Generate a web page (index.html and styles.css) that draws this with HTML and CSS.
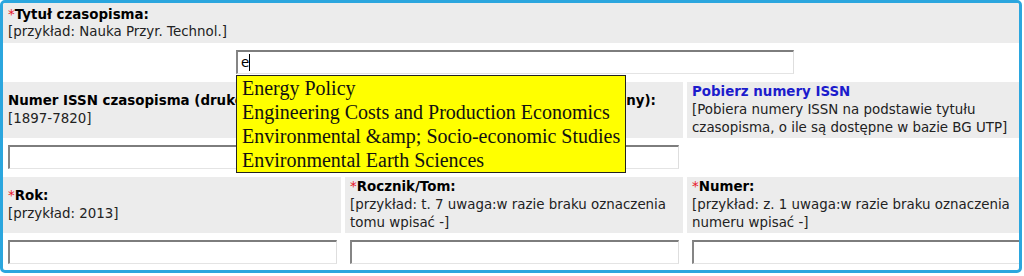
FILE: index.html
```html
<!DOCTYPE html>
<html lang="pl">
<head>
	<meta charset="UTF-8">
	<title>Czasopismo</title>
	<link rel="stylesheet" href="styles.css">
</head>
<body>
	<div class="frame">
		<div class="form">
			<div class="cell wide top">
				<div><span class="req">*</span><b>Tytuł czasopisma:</b></div>
				<div class="hint">[przykład: Nauka Przyr. Technol.]</div>
			</div>
			<div class="field wide title-field">
				<div class="suggest-wrap">
					<input class="text title-input" type="text" value="e">
					<span class="caret"></span>
					<ul class="suggest">
						<li>Energy Policy</li>
						<li>Engineering Costs and Production Economics</li>
						<li>Environmental &amp;amp; Socio-economic Studies</li>
						<li>Environmental Earth Sciences</li>
					</ul>
				</div>
			</div>

			<div class="cell mid">
				<div><b>Numer ISSN czasopisma (drukowany):</b></div>
				<div class="hint">[1897-7820]</div>
			</div>
			<div class="cell mid">
				<div><b>Numer ISSN czasopisma (elektroniczny):</b></div>
				<div class="hint">&nbsp;</div>
			</div>
			<div class="cell">
				<div><a class="link" href="#">Pobierz numery ISSN</a></div>
				<div class="hint">[Pobiera numery ISSN na podstawie tytułu<br>czasopisma, o ile są dostępne w bazie BG UTP]</div>
			</div>
			<div class="field"><input class="text" type="text"></div>
			<div class="field"><input class="text" type="text"></div>
			<div class="field"></div>

			<div class="cell mid">
				<div><span class="req">*</span><b>Rok:</b></div>
				<div class="hint">[przykład: 2013]</div>
			</div>
			<div class="cell">
				<div><span class="req">*</span><b>Rocznik/Tom:</b></div>
				<div class="hint">[przykład: t. 7 uwaga:w razie braku oznaczenia<br>tomu wpisać -]</div>
			</div>
			<div class="cell">
				<div><span class="req">*</span><b>Numer:</b></div>
				<div class="hint">[przykład: z. 1 uwaga:w razie braku oznaczenia<br>numeru wpisać -]</div>
			</div>
			<div class="field"><input class="text" type="text"></div>
			<div class="field"><input class="text" type="text"></div>
			<div class="field"><input class="text" type="text"></div>
		</div>
	</div>
</body>
</html>
```

FILE: styles.css
```css
*{margin: 0; padding: 0; box-sizing: border-box;}
ul, li{list-style: none;}
body{background: #fff; font-family: "DejaVu Sans", Verdana, sans-serif; font-size: 13.4px; color: #000;}

.frame{width: 1022px; height: 273px; border: 3px solid #2ba6de; border-radius: 5px; overflow: hidden; background: #fff;}
.form{display: grid; grid-template-columns: 338px 338px 338px; column-gap: 4px;}

.cell{background: #ececec; padding: 1px 5px; line-height: 18px; height: 56px; white-space: nowrap;}
.cell.wide, .field.wide{grid-column: 1 / 4;}
.cell.top{height: 40px; padding: 3px 5px 1px; line-height: 17px;}
.cell.mid{display: flex; flex-direction: column; justify-content: center;}

.req{color: #e8182a;}
.hint{color: #222;}
.link{color: #1c1ccc; font-weight: bold; text-decoration: none;}

.field{height: 39px; padding: 7px 4px 8px 5px;}
.text{display: block; width: 100%; height: 24px; border-style: solid; border-width: 2px 1px 1px 2px; border-color: #7d7d7d #dedede #e4e4e4 #858585; background: #fff; font-family: "DejaVu Sans", Verdana, sans-serif; font-size: 13.4px; padding: 0 3px; outline: none;}

.title-field{padding-left: 233px;}
.suggest-wrap{position: relative; width: 558px;}
.caret{position: absolute; left: 13px; top: 4px; width: 1px; height: 17px; background: #000;}
.suggest{position: absolute; left: 0; top: 25px; width: 390px; background: #ffff00; border: 1px solid #222; padding: 0 5px; z-index: 2; font-family: "Liberation Serif", "Times New Roman", serif; font-size: 20px; line-height: 24px; color: #111; white-space: nowrap;}
```
